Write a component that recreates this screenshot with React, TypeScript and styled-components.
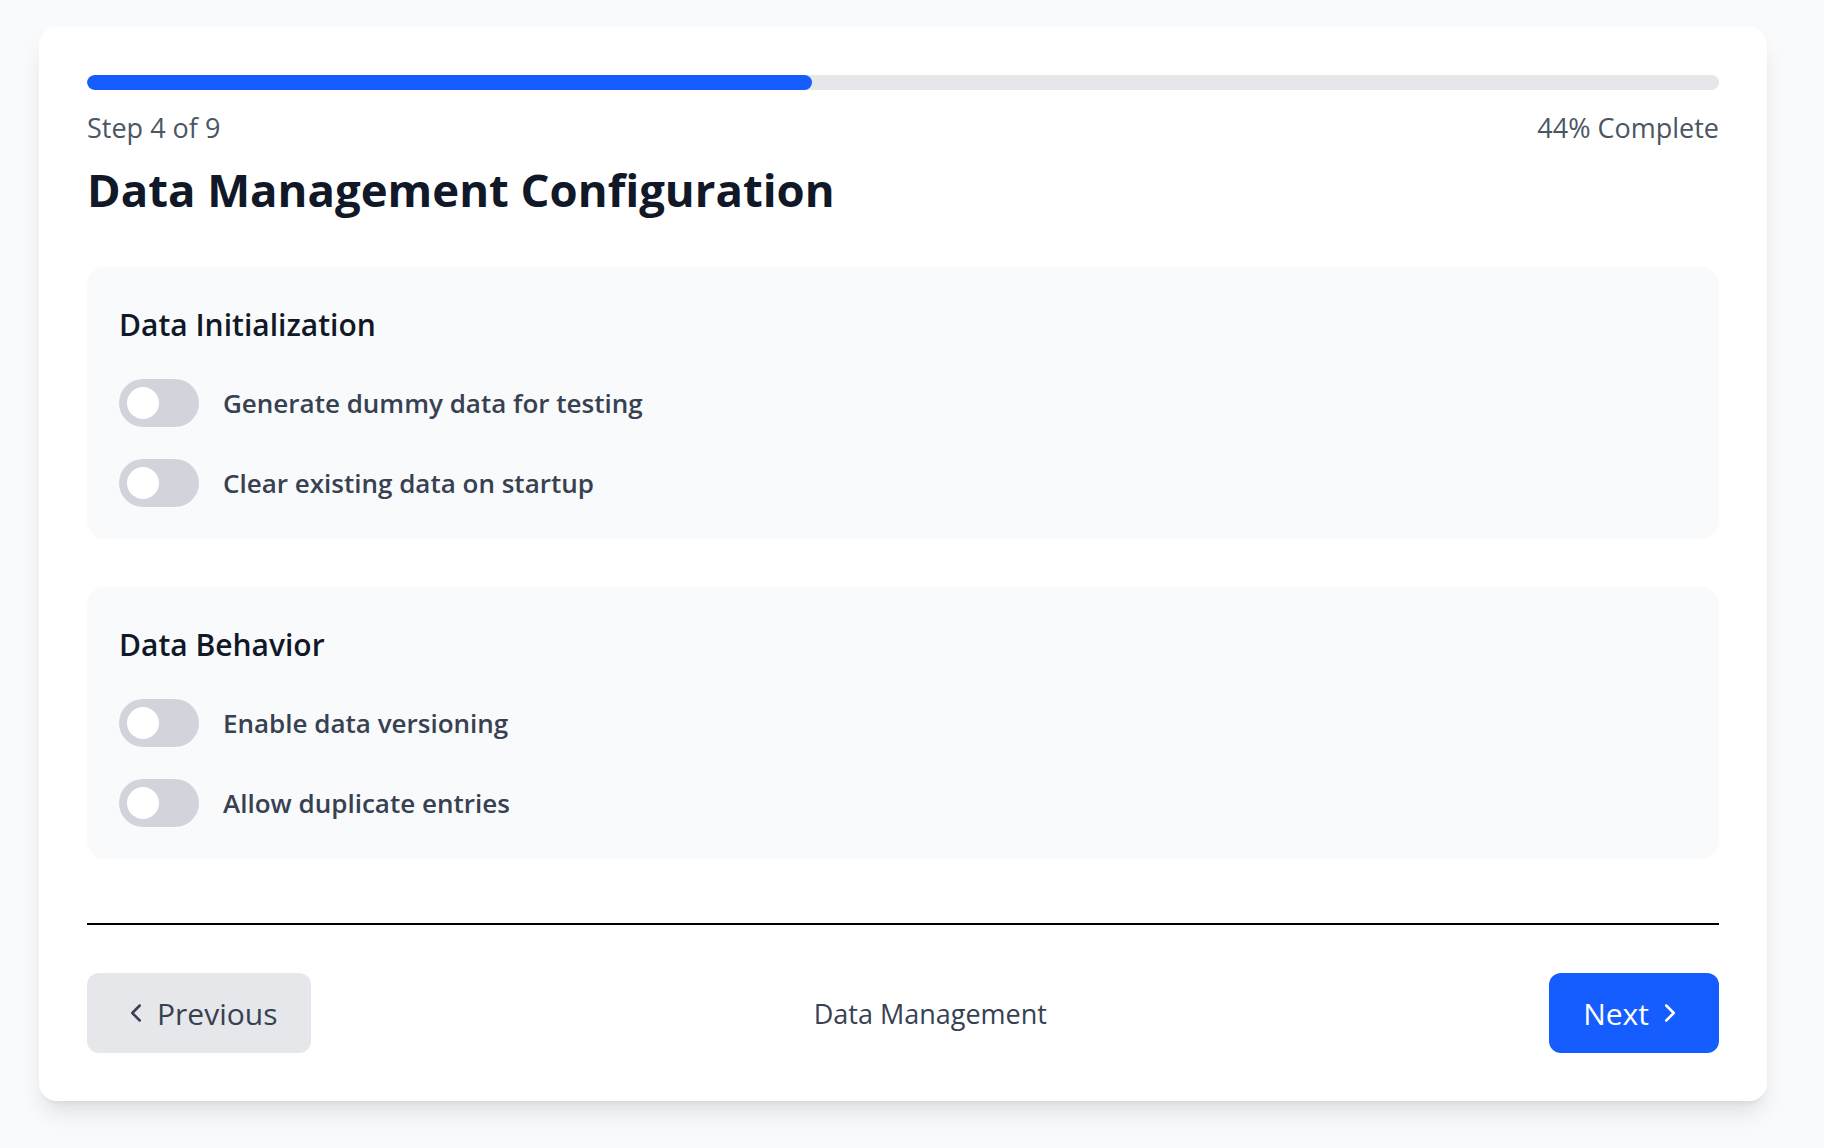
import styled, { createGlobalStyle } from "styled-components";
import { ChevronLeft, ChevronRight } from "lucide-react";

const sections = [
  {
    title: "Data Initialization",
    options: ["Generate dummy data for testing", "Clear existing data on startup"],
  },
  {
    title: "Data Behavior",
    options: ["Enable data versioning", "Allow duplicate entries"],
  },
];

const step = 4;
const total = 9;
const percent = Math.round((step / total) * 100);

export default function App() {
  return (
    <>
      <GlobalStyle />
      <Page>
        <Card>
          <Track>
            <Fill style={{ width: `${(step / total) * 100}%` }} />
          </Track>
          <MetaRow>
            <span>
              Step {step} of {total}
            </span>
            <span>{percent}% Complete</span>
          </MetaRow>
          <Title>Data Management Configuration</Title>

          <Sections>
            {sections.map((section) => (
              <Section key={section.title}>
                <SectionTitle>{section.title}</SectionTitle>
                <Options>
                  {section.options.map((label) => (
                    <Option key={label}>
                      <Switch type="button" role="switch" aria-checked={false}>
                        <Knob />
                      </Switch>
                      <OptionLabel>{label}</OptionLabel>
                    </Option>
                  ))}
                </Options>
              </Section>
            ))}
          </Sections>

          <Divider />

          <Footer>
            <Button $variant="secondary">
              <ChevronLeft size={30} strokeWidth={2} />
              Previous
            </Button>
            <StepName>Data Management</StepName>
            <Button $variant="primary">
              Next
              <ChevronRight size={30} strokeWidth={2} />
            </Button>
          </Footer>
        </Card>
      </Page>
    </>
  );
}

const GlobalStyle = createGlobalStyle`
  body {
    margin: 0;
    background: #f9fafb;
    font-family: "Open Sans", "Noto Sans", sans-serif;
  }
  * {
    box-sizing: border-box;
  }
`;

const Page = styled.div`
  min-height: 100vh;
  padding: 27px 57px 40px 39px;
`;

const Card = styled.div`
  background: #ffffff;
  border-radius: 18px;
  padding: 48px;
  box-shadow: 0 15px 22px -4px rgba(0, 0, 0, 0.1),
    0 6px 9px -6px rgba(0, 0, 0, 0.1);
`;

const Track = styled.div`
  height: 15px;
  border-radius: 999px;
  background: #e5e7eb;
  overflow: hidden;
`;

const Fill = styled.div`
  height: 100%;
  border-radius: 999px;
  background: #165dff;
`;

const MetaRow = styled.div`
  display: flex;
  justify-content: space-between;
  margin-top: 19px;
  height: 38px;
  line-height: 38px;
  font-size: 27px;
  color: #4b5563;
`;

const Title = styled.h1`
  margin: 12px 0 0;
  height: 58px;
  line-height: 60px;
  font-size: 45.5px;
  font-weight: 700;
  color: #111827;
`;

const Sections = styled.div`
  display: flex;
  flex-direction: column;
  gap: 48px;
  margin-top: 50px;
`;

const Section = styled.section`
  background: #f9fafb;
  border-radius: 18px;
  padding: 32px;
`;

const SectionTitle = styled.h2`
  margin: 0 0 32px;
  height: 48px;
  padding-top: 2px;
  line-height: 48px;
  font-size: 30px;
  font-weight: 600;
  color: #111827;
`;

const Options = styled.div`
  display: flex;
  flex-direction: column;
  gap: 32px;
`;

const Option = styled.label`
  display: flex;
  align-items: center;
  gap: 24px;
  height: 48px;
`;

const Switch = styled.button`
  position: relative;
  flex: none;
  width: 80px;
  height: 48px;
  padding: 0;
  border: none;
  border-radius: 999px;
  background: #d1d5db;
  cursor: pointer;
`;

const Knob = styled.span`
  position: absolute;
  top: 8px;
  left: 8px;
  width: 32px;
  height: 32px;
  border-radius: 50%;
  background: #ffffff;
`;

const OptionLabel = styled.span`
  font-size: 26px;
  font-weight: 600;
  color: #374151;
`;

const Divider = styled.hr`
  margin: 64px 0 0;
  border: none;
  border-top: 2px solid #000000;
`;

const Footer = styled.div`
  display: flex;
  align-items: center;
  justify-content: space-between;
  margin-top: 48px;
`;

const Button = styled.button<{ $variant: "primary" | "secondary" }>`
  display: flex;
  align-items: center;
  gap: 6px;
  height: 80px;
  padding: 0 34px;
  border: none;
  border-radius: 12px;
  font-family: inherit;
  font-size: 30px;
  cursor: pointer;
  background: ${(p) => (p.$variant === "primary" ? "#165dff" : "#e5e7eb")};
  color: ${(p) => (p.$variant === "primary" ? "#ffffff" : "#374151")};
`;

const StepName = styled.span`
  font-size: 27px;
  color: #374151;
`;
